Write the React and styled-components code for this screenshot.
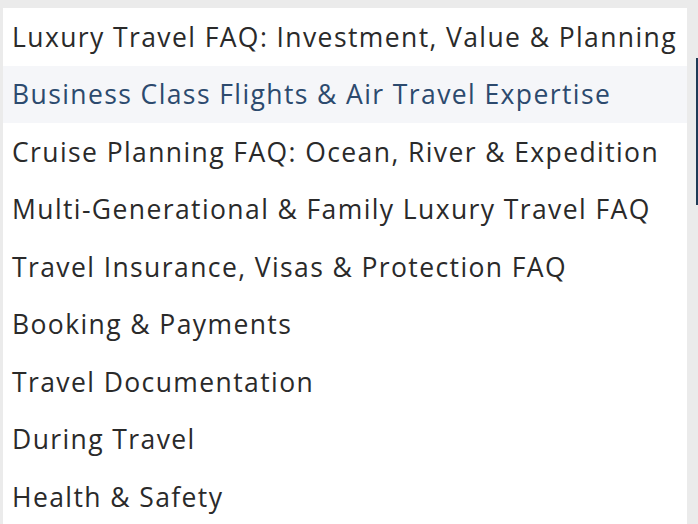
import React from "react";
import styled, { createGlobalStyle } from "styled-components";

const GlobalStyle = createGlobalStyle`
  body {
    margin: 0;
    background-color: #ebebeb;
    font-family: "Open Sans", "Noto Sans", sans-serif;
  }
`;

const Page = styled.div`
  display: flex;
  height: 524px;
  padding: 8px 0 0 3px;
  box-sizing: border-box;
  overflow: hidden;
`;

const Panel = styled.ul`
  list-style: none;
  margin: 0;
  padding: 0;
  width: 684px;
  background-color: #ffffff;
`;

const Item = styled.li`
  display: flex;
  align-items: center;
  height: 57.5px;
  padding: 0 9px;
  font-size: 26.5px;
  letter-spacing: 1.4px;
  color: ${(p) => (p.active ? "#2c4a6e" : "#2a2a2a")};
  background-color: ${(p) => (p.active ? "#f5f6f9" : "#ffffff")};
  white-space: nowrap;
`;

const Track = styled.div`
  flex: 1;
  display: flex;
  justify-content: flex-end;
  padding-top: 50px;
`;

const Thumb = styled.div`
  width: 2px;
  height: 147px;
  background-color: #1f3a56;
`;

const topics = [
  "Luxury Travel FAQ: Investment, Value & Planning",
  "Business Class Flights & Air Travel Expertise",
  "Cruise Planning FAQ: Ocean, River & Expedition",
  "Multi-Generational & Family Luxury Travel FAQ",
  "Travel Insurance, Visas & Protection FAQ",
  "Booking & Payments",
  "Travel Documentation",
  "During Travel",
  "Health & Safety",
];

const App = () => {
  return (
    <>
      <GlobalStyle />
      <Page>
        <Panel>
          {topics.map((t, i) => (
            <Item key={t} active={i === 1}>
              {t}
            </Item>
          ))}
        </Panel>
        <Track>
          <Thumb />
        </Track>
      </Page>
    </>
  );
};

export default App;
